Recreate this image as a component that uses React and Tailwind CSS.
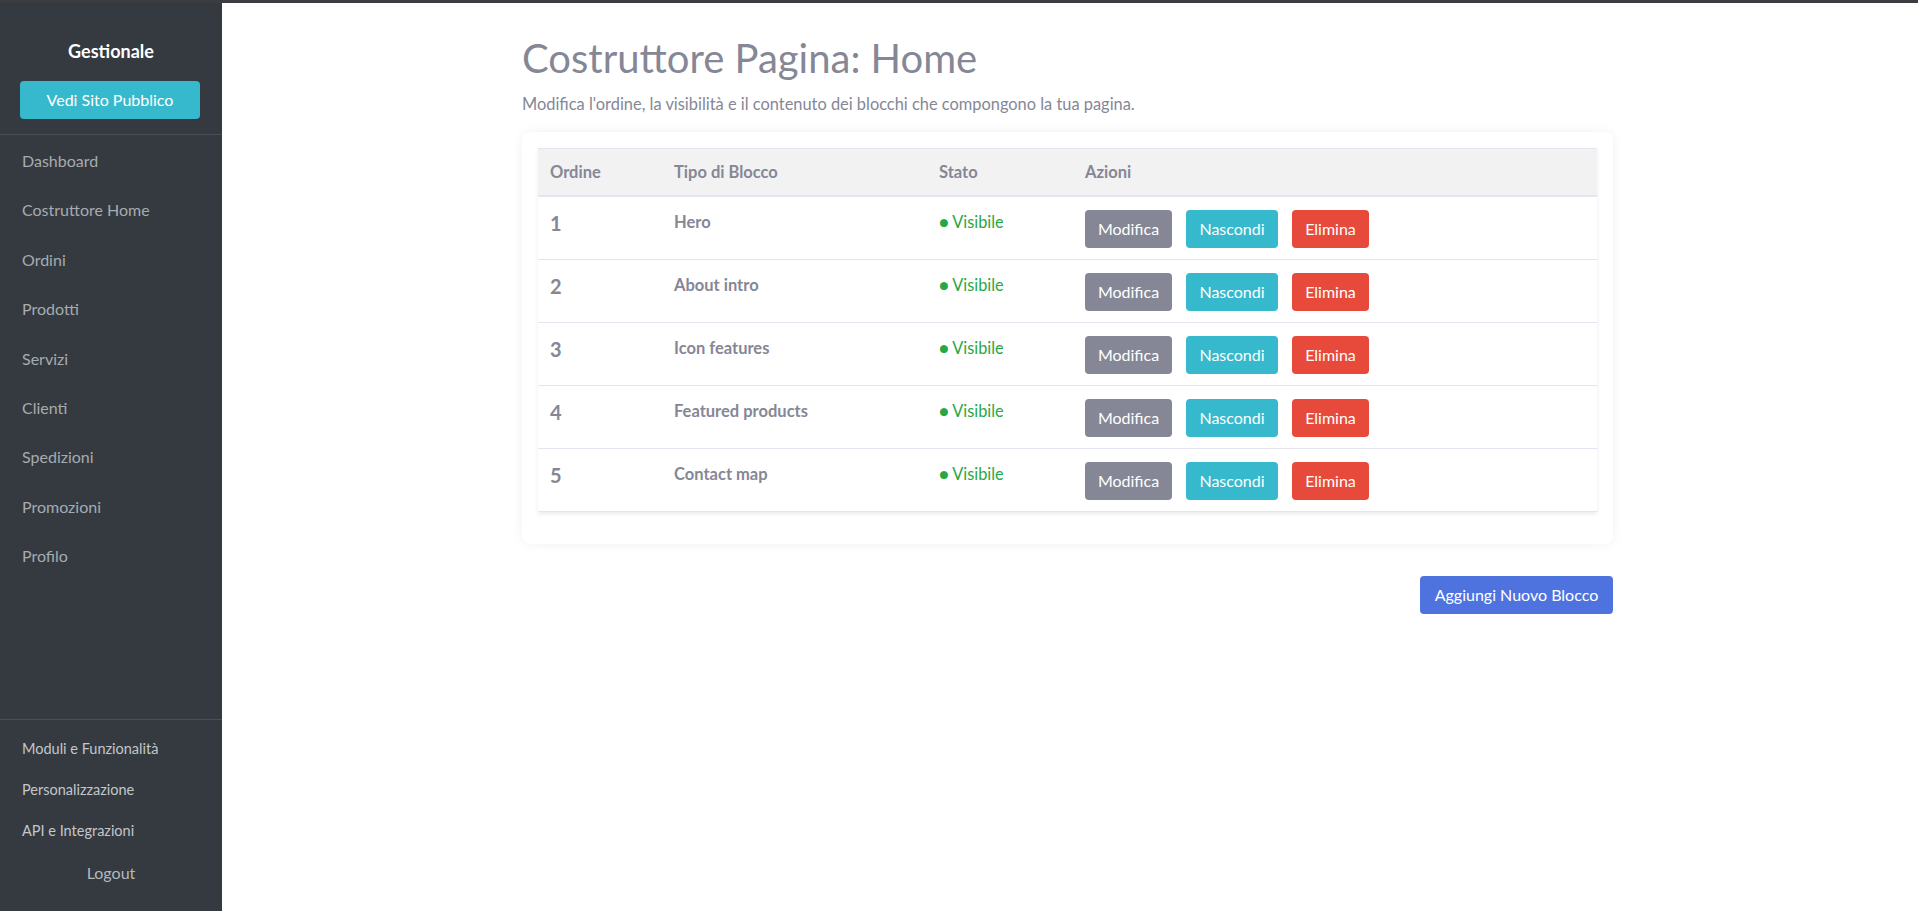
import React from 'react';

const navItems = [
  'Dashboard',
  'Costruttore Home',
  'Ordini',
  'Prodotti',
  'Servizi',
  'Clienti',
  'Spedizioni',
  'Promozioni',
  'Profilo',
];

const blocks = [
  { order: 1, type: 'Hero' },
  { order: 2, type: 'About intro' },
  { order: 3, type: 'Icon features' },
  { order: 4, type: 'Featured products' },
  { order: 5, type: 'Contact map' },
];

function Sidebar() {
  return (
    <aside className="w-[222px] shrink-0 bg-[#343a40] flex flex-col">
      <div className="pt-[35px] pb-[15px] px-5 border-b border-[#4a4f56]">
        <div className="text-center text-white font-bold text-[18px] leading-[26px]">Gestionale</div>
        <button className="mt-[17px] w-[180px] h-[38px] rounded bg-[#36b9cc] text-white text-[16px]">
          Vedi Sito Pubblico
        </button>
      </div>
      <nav className="pt-[1px] flex-1">
        {navItems.map((item) => (
          <a key={item} href="#" className="block pl-[22px] h-[49.4px] leading-[49.4px] text-[16px] text-[#a7abb0]">
            {item}
          </a>
        ))}
      </nav>
      <div className="border-t border-[#4a4f56] pt-[17px] pb-[26px]">
        <a href="#" className="block pl-[22px] h-[41px] leading-[24px] text-[14.5px] text-[#c3c6ca]">Moduli e Funzionalità</a>
        <a href="#" className="block pl-[22px] h-[41px] leading-[24px] text-[14.5px] text-[#c3c6ca]">Personalizzazione</a>
        <a href="#" className="block pl-[22px] h-[41px] leading-[24px] text-[14.5px] text-[#c3c6ca]">API e Integrazioni</a>
        <div className="text-center text-[16px] leading-[24px] text-[#b4b8bd] mt-[1px]">Logout</div>
      </div>
    </aside>
  );
}

function BlocksTable() {
  return (
    <table className="w-full border-collapse shadow-[0_2px_4px_rgba(0,0,0,0.08)]">
      <thead>
        <tr className="bg-[#f2f2f2] border-t border-[#e3e6f0] border-b-2 border-b-[#e3e6f0]">
          <th className="w-[124px] text-left px-3 py-3 text-[16.5px] leading-[22px] font-bold text-[#858796]">Ordine</th>
          <th className="w-[265px] text-left px-3 py-3 text-[16.5px] leading-[22px] font-bold text-[#858796]">Tipo di Blocco</th>
          <th className="w-[146px] text-left px-3 py-3 text-[16.5px] leading-[22px] font-bold text-[#858796]">Stato</th>
          <th className="text-left px-3 py-3 text-[16.5px] leading-[22px] font-bold text-[#858796]">Azioni</th>
        </tr>
      </thead>
      <tbody>
        {blocks.map((b) => (
          <tr key={b.order} className="border-b border-[#e3e6f0]">
            <td className="align-top px-3 pt-[13px] pb-[12px] text-[20px] leading-[26px] font-bold text-[#858796]">{b.order}</td>
            <td className="align-top px-3 pt-[13px] pb-[12px] text-[16.5px] leading-6 font-bold text-[#858796]">{b.type}</td>
            <td className="align-top px-3 pt-[13px] pb-[12px] text-[16.3px] leading-6 text-[#28a745]">● Visibile</td>
            <td className="align-top px-3 pt-[13px] pb-[11px]">
              <div className="flex gap-[14px]">
                <button className="w-[87px] h-[38px] rounded bg-[#858796] text-white text-[16px]">Modifica</button>
                <button className="w-[92px] h-[38px] rounded bg-[#36b9cc] text-white text-[16px]">Nascondi</button>
                <button className="w-[77px] h-[38px] rounded bg-[#e74a3b] text-white text-[16px]">Elimina</button>
              </div>
            </td>
          </tr>
        ))}
      </tbody>
    </table>
  );
}

export default function App() {
  return (
    <div className="h-[911px] flex flex-col bg-white font-['Lato','Noto_Sans',sans-serif] overflow-hidden">
      <div className="h-[3px] bg-[#3b3d40] shrink-0" />
      <div className="flex flex-1 min-h-0">
        <Sidebar />
        <main className="flex-1 pl-[300px]">
          <div className="w-[1091px]">
            <h1 className="pt-[31px] text-[40px] leading-[48px] font-normal text-[#858796]">Costruttore Pagina: Home</h1>
            <p className="mt-[10px] text-[16.4px] leading-6 text-[#858796]">
              Modifica l'ordine, la visibilità e il contenuto dei blocchi che compongono la tua pagina.
            </p>
            <div className="mt-4 bg-white rounded-lg p-4 shadow-[0_0_12px_rgba(0,0,0,0.06)]">
              <BlocksTable />
              <div className="h-4" />
            </div>
            <div className="flex justify-end mt-8">
              <button className="w-[193px] h-[38px] rounded bg-[#4e73df] text-white text-[16px]">Aggiungi Nuovo Blocco</button>
            </div>
          </div>
        </main>
      </div>
    </div>
  );
}
